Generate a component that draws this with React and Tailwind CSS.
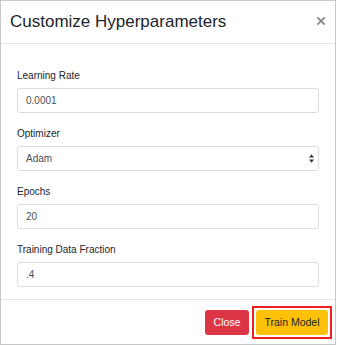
import React from "react";

const font = { fontFamily: '"Liberation Sans", Arial, Helvetica, sans-serif' };

function Field({ label, children }) {
  return (
    <div className="flex flex-col mb-[13px] last:mb-0">
      <div className="text-[10px] leading-[15px] text-[#212529] mb-[5px]">{label}</div>
      {children}
    </div>
  );
}

function Input({ value }) {
  return (
    <div className="h-[25px] border border-[#d9dde1] rounded-[3px] bg-white flex items-center px-[8px] text-[10px] text-[#495057]">
      {value}
    </div>
  );
}

export default function App() {
  return (
    <div className="w-[337px] h-[346px] bg-white" style={font}>
      <div className="w-[336px] h-[345px] border border-[#c8c8c8] bg-white flex flex-col">
        <div className="h-[43px] shrink-0 border-b border-[#e3e6e9] flex items-center justify-between pl-[9px] pr-[10px]">
          <div className="text-[17px] leading-[20px] text-[#212529]">Customize Hyperparameters</div>
          <svg width="8" height="8" viewBox="0 0 8 8" className="mt-[-3px]">
            <path d="M1 1 L7 7 M7 1 L1 7" stroke="#8a8a8a" strokeWidth="1.8" strokeLinecap="square" />
          </svg>
        </div>
        <div className="px-[16px] pt-[24px] pb-[12px] flex flex-col">
          <Field label="Learning Rate">
            <Input value="0.0001" />
          </Field>
          <Field label="Optimizer">
            <div className="h-[25px] border border-[#d9dde1] rounded-[3px] bg-white flex items-center justify-between pl-[8px] pr-[4px] text-[10px] text-[#495057]">
              <span>Adam</span>
              <svg width="5" height="9" viewBox="0 0 5 9">
                <path d="M0 3.6 L2.5 0.2 L5 3.6 Z" fill="#3a3a3a" />
                <path d="M0 5.4 L2.5 8.8 L5 5.4 Z" fill="#3a3a3a" />
              </svg>
            </div>
          </Field>
          <Field label="Epochs">
            <Input value="20" />
          </Field>
          <Field label="Training Data Fraction">
            <Input value=".4" />
          </Field>
        </div>
        <div className="flex-1 border-t border-[#e3e6e9] flex items-center justify-end gap-[3px] pr-[3px]">
          <button className="h-[25px] px-[8.5px] rounded-[3px] bg-[#dc3545] text-white text-[10.5px] leading-none">
            Close
          </button>
          <div className="border-2 border-[#f01f1f] p-[2px]">
            <button className="h-[25px] px-[8.5px] rounded-[3px] bg-[#ffc107] text-[#212529] text-[10.5px] leading-none block">
              Train Model
            </button>
          </div>
        </div>
      </div>
    </div>
  );
}
